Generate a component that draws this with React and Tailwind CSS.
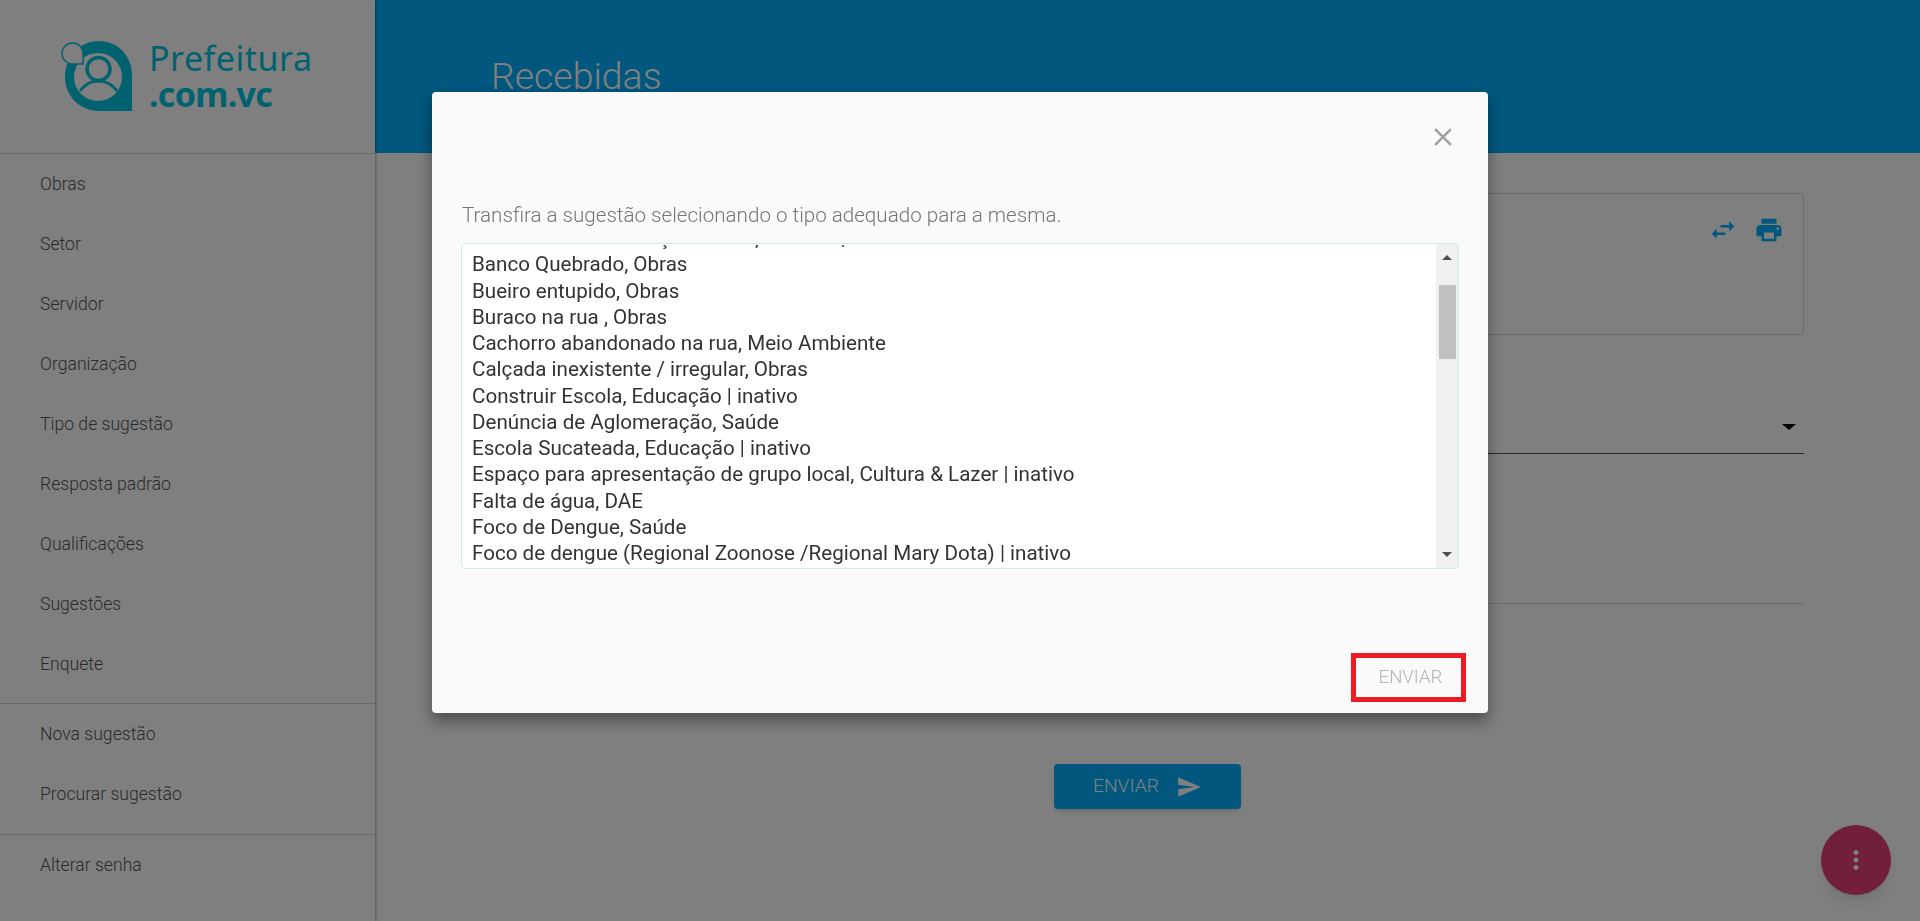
import React from 'react';
import { MdClose, MdMoreVert, MdPrint, MdSend, MdSwapHoriz } from 'react-icons/md';

const mainLinks = ['Obras', 'Setor', 'Servidor', 'Organização', 'Tipo de sugestão', 'Resposta padrão', 'Qualificações', 'Sugestões', 'Enquete'];
const suggestionLinks = ['Nova sugestão', 'Procurar sugestão'];

const options = [
  'Ausência de sinalização de rua, Emdurb | inativo',
  'Banco Quebrado, Obras',
  'Bueiro entupido, Obras',
  'Buraco na rua , Obras',
  'Cachorro abandonado na rua, Meio Ambiente',
  'Calçada inexistente / irregular, Obras',
  'Construir Escola, Educação | inativo',
  'Denúncia de Aglomeração, Saúde',
  'Escola Sucateada, Educação | inativo',
  'Espaço para apresentação de grupo local, Cultura & Lazer | inativo',
  'Falta de água, DAE',
  'Foco de Dengue, Saúde',
  'Foco de dengue (Regional Zoonose /Regional Mary Dota) | inativo',
];

const Logo = () => (
  <div className="flex items-center gap-[4px] text-[#00c4de]">
    <svg viewBox="0 0 90 85" className="w-[90px] h-[85px]" fill="none">
      <path d="M44 7C63 7 77 22 77 42V77H44C25 77 10 62 10 43C10 23 25 7 44 7Z" fill="#00c4de" />
      <circle cx="43" cy="43" r="24" fill="#ffffff" />
      <circle cx="43.5" cy="35" r="11.5" stroke="#00c4de" strokeWidth="3.5" />
      <path d="M25 57C30 50 37 47 43.5 47C50 47 57 50 62 57" stroke="#00c4de" strokeWidth="3" />
      <path d="M28 30H18A10.5 10.5 0 1 1 28 19.5Z" fill="#ffffff" stroke="#00c4de" strokeWidth="1.5" />
    </svg>
    <div className="-mt-[2px] font-['Noto_Sans',sans-serif] text-[34px] leading-[36px]">
      <div className="tracking-[0.5px]">Prefeitura</div>
      <div className="font-bold tracking-[-0.7px]">.com.vc</div>
    </div>
  </div>
);

const SideLink = ({ label }) => (
  <a className="flex items-center h-[60px] pl-10 text-[17.6px] font-light text-[#555555]">{label}</a>
);

const App = () => {
  return (
    <div className="flex min-h-[921px] bg-white font-['Roboto',sans-serif]">
      {/* Sidebar */}
      <aside className="w-[375px] h-[921px] shrink-0 bg-white shadow-[1px_0_3px_rgba(0,0,0,0.3)] z-10">
        <div className="flex items-center pl-[55px] h-[154px] border-b border-gray-300">
          <Logo />
        </div>
        <nav className="pb-[9px] border-b border-gray-300">
          {mainLinks.map((label) => <SideLink key={label} label={label} />)}
        </nav>
        <nav className="pb-[10px] border-b border-gray-300">
          {suggestionLinks.map((label) => <SideLink key={label} label={label} />)}
        </nav>
        <SideLink label="Alterar senha" />
      </aside>

      {/* Main content */}
      <main className="flex-1">
        <header className="h-[153px] bg-[#02aefc] pl-[116px] pt-[52px]">
          <h1 className="text-[37.4px] leading-[48px] font-light text-white">Recebidas</h1>
        </header>
        <div className="pl-[117px] pr-[116px] pt-10">
          <div className="h-[142px] border border-gray-300 rounded-sm flex justify-end gap-[16px] pt-[21px] pr-[19px] text-[#02aefc]">
            <MdSwapHoriz className="w-[30px] h-[30px]" />
            <MdPrint className="w-[30px] h-[30px]" />
          </div>
          <div className="h-[119px] flex items-end justify-end border-b border-gray-600 pb-[23px] pr-[8px]">
            <div className="border-x-[7px] border-t-[6px] border-x-transparent border-t-black" />
          </div>
          <div className="h-[150px] border-b border-gray-300" />
          <div className="flex justify-center pt-40 pr-[1px]">
            <button className="flex items-center justify-center gap-[17px] w-[187px] h-[45px] rounded-sm bg-[#02aefc] text-white text-[19.2px] font-light shadow-md">
              ENVIAR
              <MdSend className="w-[26px] h-[26px]" />
            </button>
          </div>
        </div>
      </main>

      {/* Floating button */}
      <button className="fixed right-[29px] bottom-[26px] w-[70px] h-[70px] rounded-full bg-[#e23f75] text-white flex items-center justify-center shadow-lg">
        <MdMoreVert className="w-[30px] h-[30px]" />
      </button>

      {/* Modal */}
      <div className="fixed inset-0 z-20 bg-black/50 flex justify-center items-start pt-[92px]">
        <div className="w-[1056px] h-[621px] rounded-sm bg-[#fafafa] shadow-[0_8px_16px_rgba(0,0,0,0.4)] flex flex-col px-[29px]">
          <div className="flex justify-end h-[102px] pt-[30px] pr-[1px]">
            <MdClose className="w-[30px] h-[30px] text-[#a0a0a0]" />
          </div>
          <p className="pl-[1px] text-[20.6px] font-light leading-[42px] text-[#757575] h-[49px]">Transfira a sugestão selecionando o tipo adequado para a mesma.</p>
          <div className="h-[326px] border border-[#c8f0ea] rounded-sm bg-white flex overflow-hidden">
            <div className="flex-1 py-[1px] min-w-0">
              <ul className="h-full overflow-hidden px-[10px] text-[20.6px] leading-[26.27px] text-[#333333]">
                {options.map((o, i) => (
                  <li key={o} className={i === 0 ? 'whitespace-nowrap -mt-[20px]' : 'whitespace-nowrap'}>{o}</li>
                ))}
              </ul>
            </div>
            <div className="w-[22px] bg-[#f0f0f0] flex flex-col items-center">
              <div className="mt-[11px] border-x-[5px] border-b-[5px] border-x-transparent border-b-[#505050]" />
              <div className="mt-[25px] w-[17px] h-[74px] bg-[#c0c0c0]" />
              <div className="mt-auto mb-[11px] border-x-[5px] border-t-[5px] border-x-transparent border-t-[#505050]" />
            </div>
          </div>
          <div className="flex justify-end mt-[84px] -mr-[7px]">
            <button className="w-[115px] h-[49px] pl-[4px] border-[5px] border-[#ed1c24] text-[18.6px] font-light text-[#b5b5b5]">ENVIAR</button>
          </div>
        </div>
      </div>
    </div>
  );
};

export default App;
